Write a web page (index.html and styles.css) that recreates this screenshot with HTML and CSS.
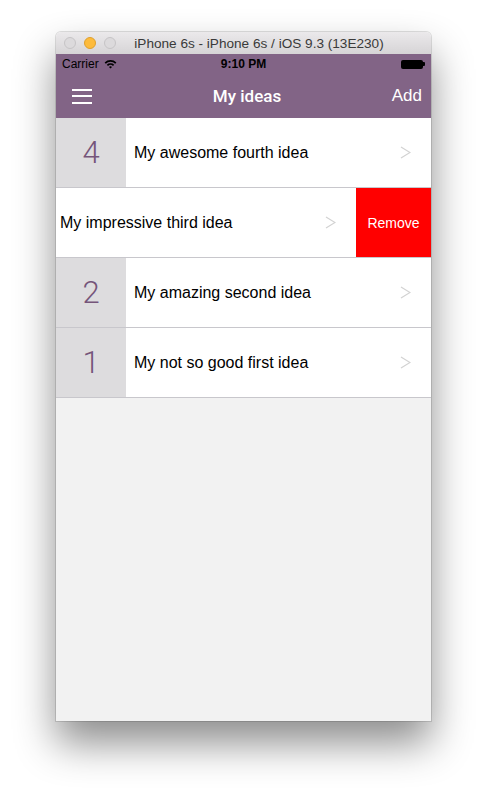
FILE: index.html
```html
<!DOCTYPE html>
<html>
<head>
<meta charset="utf-8">
<link rel="stylesheet" href="styles.css">
</head>
<body>
<div class="window">
  <div class="titlebar">
    <div class="lights">
      <span class="light gray"></span>
      <span class="light orange"></span>
      <span class="light gray"></span>
    </div>
    <div class="wtitle">iPhone 6s - iPhone 6s / iOS 9.3 (13E230)</div>
  </div>
  <div class="screen">
    <div class="statusbar">
      <div class="carrier">Carrier
        <svg class="wifi" width="13" height="10" viewBox="0 0 13 10">
          <path d="M0.6 3.4 A8.5 8.5 0 0 1 12.4 3.4 L11.2 4.7 A6.8 6.8 0 0 0 1.8 4.7 Z" fill="#000"/>
          <path d="M2.8 5.7 A5.4 5.4 0 0 1 10.2 5.7 L9 7 A3.7 3.7 0 0 0 4 7 Z" fill="#000"/>
          <path d="M5 8 A2.2 2.2 0 0 1 8 8 L6.5 9.6 Z" fill="#000"/>
        </svg>
      </div>
      <div class="time">9:10 PM</div>
      <div class="battery"><span class="bat-body"></span><span class="bat-tip"></span></div>
    </div>
    <div class="navbar">
      <div class="burger"><span></span><span></span><span></span></div>
      <div class="navtitle">My ideas</div>
      <div class="add">Add</div>
    </div>
    <div class="list">
      <div class="row">
        <div class="num">4</div>
        <div class="label">My awesome fourth idea</div>
        <svg class="chev" width="11" height="13" viewBox="0 0 11 13"><path d="M1 1 L10 6.5 L1 12" fill="none" stroke="#d2d2d2" stroke-width="1.2"/></svg>
      </div>
      <div class="row swiped">
        <div class="label">My impressive third idea</div>
        <svg class="chev" width="11" height="13" viewBox="0 0 11 13"><path d="M1 1 L10 6.5 L1 12" fill="none" stroke="#d2d2d2" stroke-width="1.2"/></svg>
        <div class="remove">Remove</div>
      </div>
      <div class="row">
        <div class="num">2</div>
        <div class="label">My amazing second idea</div>
        <svg class="chev" width="11" height="13" viewBox="0 0 11 13"><path d="M1 1 L10 6.5 L1 12" fill="none" stroke="#d2d2d2" stroke-width="1.2"/></svg>
      </div>
      <div class="row">
        <div class="num">1</div>
        <div class="label">My not so good first idea</div>
        <svg class="chev" width="11" height="13" viewBox="0 0 11 13"><path d="M1 1 L10 6.5 L1 12" fill="none" stroke="#d2d2d2" stroke-width="1.2"/></svg>
      </div>
    </div>
  </div>
</div>
</body>
</html>
```
FILE: styles.css
```css
html, body {
  margin: 0;
  padding: 0;
  background: #fff;
}
body {
  width: 487px;
  height: 801px;
  overflow: hidden;
  padding-top: 32px;
  box-sizing: border-box;
  font-family: "Liberation Sans", Arial, sans-serif;
}
.window {
  width: 375px;
  margin: 0 auto;
  border-radius: 5px 5px 0 0;
  box-shadow: 0 22px 40px rgba(0,0,0,0.45), 0 0 0 1px rgba(0,0,0,0.12);
}
.titlebar {
  height: 22px;
  border-radius: 5px 5px 0 0;
  background: linear-gradient(#ebe9eb, #d6d4d6);
  display: flex;
  align-items: center;
}
.lights {
  display: flex;
  gap: 8px;
  padding-left: 8px;
  padding-right: 16px;
}
.light {
  width: 12px;
  height: 12px;
  border-radius: 50%;
  box-sizing: border-box;
}
.light.gray {
  background: #dcdadc;
  border: 1px solid #c6c4c6;
}
.light.orange {
  background: #fdbb3c;
  border: 1px solid #dfa02d;
}
.wtitle {
  flex: 1;
  text-align: center;
  font-size: 13.6px;
  color: #3a3a3a;
  padding-right: 45px;
  white-space: nowrap;
}
.screen {
  height: 667px;
  background: #f2f2f2;
}
.statusbar {
  height: 20px;
  background: #826486;
  display: flex;
  align-items: center;
  justify-content: space-between;
  padding: 0 6px;
  font-size: 12px;
  color: #000;
}
.carrier {
  display: flex;
  align-items: center;
  gap: 5px;
  width: 80px;
}
.time {
  font-weight: bold;
  font-size: 12px;
}
.battery {
  width: 80px;
  display: flex;
  justify-content: flex-end;
  align-items: center;
}
.bat-body {
  width: 22px;
  height: 9px;
  background: #000;
  border-radius: 2px;
}
.bat-tip {
  width: 2px;
  height: 4px;
  background: #000;
  border-radius: 0 1px 1px 0;
}
.navbar {
  height: 44px;
  background: #826486;
  display: flex;
  align-items: center;
  justify-content: space-between;
  padding: 0 9px 0 16px;
  color: #fff;
}
.burger {
  display: flex;
  flex-direction: column;
  gap: 4.5px;
  width: 60px;
}
.burger span {
  display: block;
  width: 20px;
  height: 2px;
  background: #fff;
}
.navtitle {
  font-family: Roboto, "Liberation Sans", sans-serif;
  font-size: 17px;
  font-weight: 500;
}
.add {
  width: 60px;
  text-align: right;
  font-size: 17px;
}
.list {
  background: #fff;
}
.row {
  height: 69px;
  border-bottom: 1px solid #c8c7cc;
  display: flex;
  align-items: center;
  background: #fff;
  overflow: hidden;
}
.num {
  width: 70px;
  height: 69px;
  background: #dddcde;
  color: #75557a;
  font-family: Roboto, "Liberation Sans", sans-serif;
  font-weight: 300;
  font-size: 31px;
  display: flex;
  align-items: center;
  justify-content: center;
  flex-shrink: 0;
}
.label {
  flex: 1;
  padding-left: 8px;
  padding-top: 1px;
  font-size: 16px;
  color: #000;
}
.swiped .label {
  padding-left: 4px;
}
.chev {
  margin-right: 20px;
  flex-shrink: 0;
}
.remove {
  width: 75px;
  height: 69px;
  background: #ff0000;
  color: #fff;
  font-size: 14px;
  display: flex;
  align-items: center;
  justify-content: center;
  flex-shrink: 0;
}
```
